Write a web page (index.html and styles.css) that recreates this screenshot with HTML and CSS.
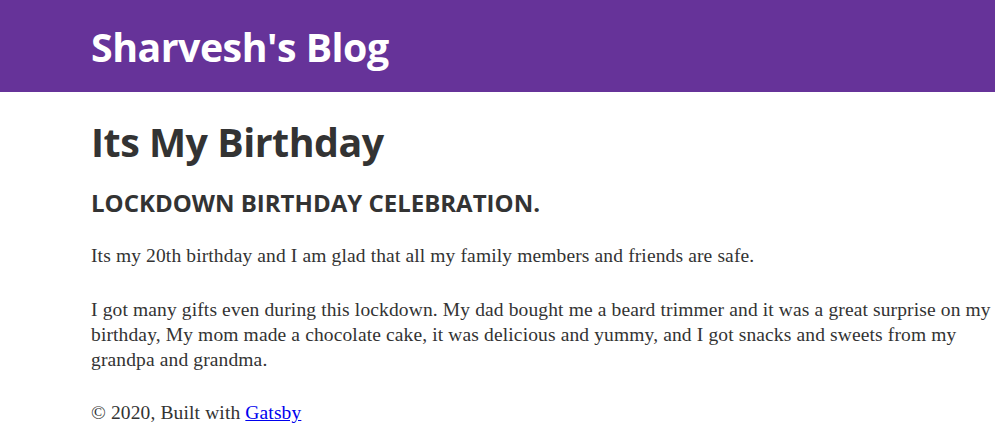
FILE: index.html
```html
<!DOCTYPE html>
<html>
<head>
<meta charset="utf-8">
<link rel="stylesheet" href="styles.css">
</head>
<body>
<header class="site-header">
  <div class="wrap">
    <h1 class="site-title">Sharvesh's Blog</h1>
  </div>
</header>
<main class="wrap content">
  <h1 class="post-title">Its My Birthday</h1>
  <h2 class="post-subtitle">LOCKDOWN BIRTHDAY CELEBRATION.</h2>
  <p>Its my 20th birthday and I am glad that all my family members and friends are safe.</p>
  <p>I got many gifts even during this lockdown. My dad bought me a beard trimmer and it was a great surprise on my birthday, My mom made a chocolate cake, it was delicious and yummy, and I got snacks and sweets from my grandpa and grandma.</p>
  <footer class="footer">© 2020, Built with <a href="#">Gatsby</a></footer>
</main>
</body>
</html>
```
FILE: styles.css
```css
html, body {
  margin: 0;
  padding: 0;
  overflow: hidden;
}
body {
  width: 995px;
  background: #fff;
  color: #333;
  font-family: "Liberation Serif", "DejaVu Serif", serif;
}
.wrap {
  padding-left: 91px;
  width: 902px;
}
.site-header {
  background: #663399;
  height: 92px;
  box-sizing: border-box;
  padding-top: 24px;
}
.site-title {
  margin: 0;
  font-family: "Open Sans", "Noto Sans", sans-serif;
  font-weight: 700;
  font-size: 39.3px;
  line-height: 46px;
  color: #fff;
  letter-spacing: -0.5px;
}
.content {
  padding-top: 25px;
}
.post-title {
  margin: 0;
  font-family: "Open Sans", "Noto Sans", sans-serif;
  font-weight: 700;
  font-size: 39.4px;
  line-height: 50px;
  color: #333;
  letter-spacing: -0.5px;
}
.post-subtitle {
  margin: 21px 0 0;
  font-family: "Open Sans", "Noto Sans", sans-serif;
  font-weight: 700;
  font-size: 24px;
  line-height: 30px;
  color: #333;
}
p {
  margin: 25px 0 0;
  font-size: 19.5px;
  line-height: 25px;
  letter-spacing: 0.13px;
}
p + p {
  margin-top: 29px;
}
.footer {
  margin-top: 28px;
  font-size: 19.5px;
  line-height: 25px;
  letter-spacing: 0.13px;
}
.footer a {
  color: #0000ee;
}
```
